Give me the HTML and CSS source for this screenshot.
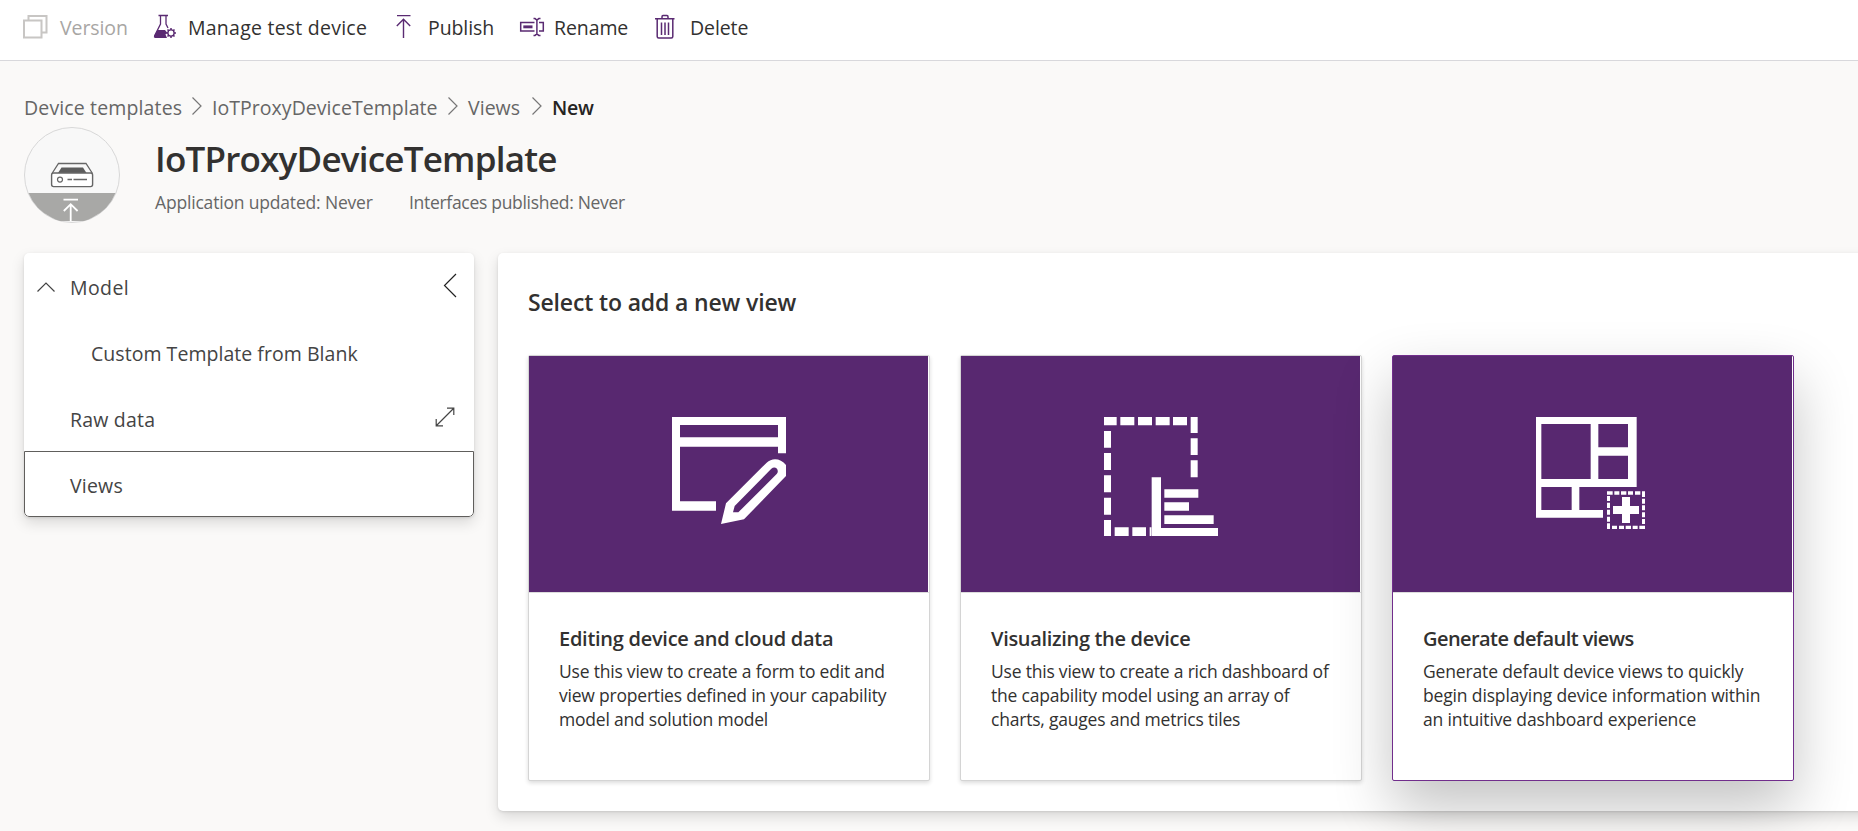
FILE: index.html
```html
<!DOCTYPE html>
<html lang="en">
<head>
<meta charset="utf-8">
<title>IoTProxyDeviceTemplate</title>
<link rel="stylesheet" href="styles.css">
</head>
<body>
<header class="toolbar">
  <div class="tool tool-disabled">
    <svg class="tool-icon" viewBox="0 0 26 26"><path d="M6.500 6.500V2.500H24.500V19H20.500M2 6.900H19.500V24H2Z" transform="translate(0 -.5)" fill="none" stroke="#c8c6c4" stroke-width="2"/></svg>
    <span>Version</span>
  </div>
  <div class="tool">
    <svg class="tool-icon" viewBox="0 0 26 26"><path d="M5.500 1.500H15M7.500 1.500V10L1.500 22M13 1.500V10L15 14" fill="none" stroke="#5a2a72" stroke-width="1.300"/><path d="M4.500 16H12L14 18.500 12.500 20.500 14 24H2Q.2 23.500 1 22Z" fill="#5a2a72"/><circle cx="18" cy="19" r="3.100" fill="none" stroke="#5a2a72" stroke-width="1.300"/><path d="M18 14v2M18 22v2M13 19h2M21 19h2M14.500 15.500l1.400 1.400M20.100 21.100l1.400 1.400M14.500 22.500l1.400-1.400M20.100 16.900l1.400-1.400" stroke="#5a2a72" stroke-width="1.500"/></svg>
    <span class="label-manage">Manage test device</span>
  </div>
  <div class="tool">
    <svg class="tool-icon" viewBox="0 0 26 26"><path d="M4 1.600H17.500M10.500 24V5.500M3.800 12L10.500 5.300 17.200 12" fill="none" stroke="#5a2a72" stroke-width="1.400"/></svg>
    <span>Publish</span>
  </div>
  <div class="tool">
    <svg class="tool-icon" viewBox="0 0 26 26"><path d="M15.500 8.500H1.700V17H15.500M20 8.500H24.300V17H20M14.500 4.600H16L17.900 6 19.800 4.600H21.500M14.500 21.400H16L17.900 20 19.800 21.400H21.500M17.900 6V20" fill="none" stroke="#5a2a72" stroke-width="1.500"/><path d="M4.300 11.400H13.500V14.300H4.300Z" fill="#5a2a72"/></svg>
    <span>Rename</span>
  </div>
  <div class="tool">
    <svg class="tool-icon" viewBox="0 0 26 26"><path d="M0 4.700H19.500M7 4.500V2.700Q7 1.600 8 1.600H12Q13 1.600 13 2.700V4.500M2.200 5V22.500Q2.200 24 3.700 24H16.300Q17.800 24 17.800 22.500V5M6.500 8.500V21M10 8.500V21M13.500 8.500V21" fill="none" stroke="#5a2a72" stroke-width="1.500"/></svg>
    <span>Delete</span>
  </div>
</header>

<nav class="breadcrumb">
  <span class="crumb crumb-root">Device templates</span>
  <svg class="crumb-sep" viewBox="0 0 10 18"><path d="M.5.500L9 9 .5 17.500"/></svg>
  <span class="crumb crumb-template">IoTProxyDeviceTemplate</span>
  <svg class="crumb-sep" viewBox="0 0 10 18"><path d="M.5.500L9 9 .5 17.500"/></svg>
  <span class="crumb crumb-views">Views</span>
  <svg class="crumb-sep" viewBox="0 0 10 18"><path d="M.5.500L9 9 .5 17.500"/></svg>
  <span class="crumb crumb-current">New</span>
</nav>

<section class="summary">
  <svg class="avatar" viewBox="0 0 96 96">
    <circle cx="48" cy="48" r="47.500" fill="#f8f8f8" stroke="#d8d8d8"/>
    <path d="M4.500 66H91.500A47 47 0 0 1 68 90.800Q65 92.600 60 94H36Q31 92.600 28 90.800A47 47 0 0 1 4.500 66Z" fill="#a8a8a6"/>
    <path d="M28 46.500L34.500 36.500H62L68.500 46.500" fill="none" stroke="#666" stroke-width="1.300"/>
    <path d="M34 46L37.500 40.500H59L62.500 46Z" fill="#5c5c5c"/>
    <rect x="27.600" y="46" width="41" height="13.600" rx="2" fill="#fff" stroke="#666" stroke-width="1.400"/>
    <circle cx="36" cy="52.600" r="2.500" fill="none" stroke="#666" stroke-width="1.200"/>
    <path d="M43.500 52.500H48M49.500 52.500H63" stroke="#666" stroke-width="1.300"/>
    <path d="M39.500 72.700H54M46.700 94V77M39.800 84L46.700 77.200 53.600 84" fill="none" stroke="#fff" stroke-width="1.800"/>
  </svg>
  <div class="summary-text">
    <h1 class="title">IoTProxyDeviceTemplate</h1>
    <div class="meta"><span class="meta-first">Application updated: Never</span><span class="meta-second">Interfaces published: Never</span></div>
  </div>
</section>

<main class="layout">
  <aside class="sidebar">
    <div class="row">
      <svg class="row-toggle" viewBox="0 0 20 12"><path d="M1.500 10.500L10 2 18.500 10.500"/></svg>
      <span class="row-label label-model">Model</span>
      <svg class="row-collapse" viewBox="0 0 14 26"><path d="M13 1L1.500 12.500 13 24"/></svg>
    </div>
    <div class="row row-child"><span class="row-label">Custom Template from Blank</span></div>
    <div class="row row-plain">
      <span class="row-label label-raw">Raw data</span>
      <svg class="row-expand" viewBox="0 0 20 20"><path d="M1.500 18.500L18.500 1.500M12 1.200H18.800V8M1.200 12V18.800H8"/></svg>
    </div>
    <div class="row row-plain row-selected"><span class="row-label label-views">Views</span></div>
  </aside>

  <section class="panel">
    <h2 class="panel-title">Select to add a new view</h2>
    <div class="cards">
      <article class="card">
        <div class="card-art">
          <svg width="114" height="107" viewBox="96 81 342 321" fill="#fff"><path d="M96 81H438V190H414V170H120V334H228V362H96ZM120 105V142H414V105Z" fill-rule="evenodd"/><path d="M243 402L258 340 380 218C396 202 422 204 438 225V258L312 388ZM279 367L295 367 410 252C420 240 406 226 394 236L284 348Z" fill-rule="evenodd"/></svg>
        </div>
        <div class="card-body">
          <h3 class="card-title title-edit">Editing device and cloud data</h3>
          <p class="card-text">Use this view to create a form to edit and<br>view properties defined in your capability<br>model and solution model</p>
        </div>
      </article>
      <article class="card">
        <div class="card-art">
          <svg width="114" height="119" viewBox="72 81 342 357" fill="#fff"><path d="M72 81h38v25h-38zM121 81h42v25h-42zM174 81h42v25h-42zM227 81h42v25h-42zM279 81h42v25h-42zM332 81h21v48h-21zM332 145h21v50h-21zM332 211h21v51h-21zM72 123h21v50h-21zM72 189h21v51h-21zM72 256h21v51h-21zM72 323h21v51h-21zM72 390h21v48h-21zM104 412h42v26h-42zM157 412h41v26h-41zM209 412h5v26h-5zM215 262H243V414H414V438H215ZM253 298h102v25h-102zM253 337h74v25h-74zM253 376h148v26h-148z"/></svg>
        </div>
        <div class="card-body">
          <h3 class="card-title title-visual">Visualizing the device</h3>
          <p class="card-text">Use this view to create a rich dashboard of<br>the capability model using an array of<br>charts, gauges and metrics tiles</p>
        </div>
      </article>
      <article class="card card-active">
        <div class="card-art">
          <svg width="109" height="112" viewBox="78 81 327 336" fill="#fff"><path fill-rule="evenodd" d="M78 81H380V291H208V360H279V383H78ZM94 102V267H242V102ZM265 102V172H354V102ZM265 197V267H354V197ZM94 291V360H185V291Z"/><path d="M336 321h24v27h27v24h-27v27h-24v-27h-27v-24h27zM291 304h17v10h-17zM313 304h15v10h-15zM333 304h16v10h-16zM354 304h15v10h-15zM375 304h16v10h-16zM396 304h9v17h-9zM396 326h9v15h-9zM396 346h9v15h-9zM396 367h9v15h-9zM396 387h9v15h-9zM388 407h17v10h-17zM368 407h15v10h-15zM347 407h16v10h-16zM327 407h15v10h-15zM306 407h15v10h-15zM291 318h9v15h-9zM291 338h9v16h-9zM291 359h9v15h-9zM291 380h9v15h-9zM291 400h9v17h-9z"/></svg>
        </div>
        <div class="card-body">
          <h3 class="card-title title-generate">Generate default views</h3>
          <p class="card-text text-generate">Generate default device views to quickly<br>begin displaying device information within<br>an intuitive dashboard experience</p>
        </div>
      </article>
    </div>
  </section>
</main>
</body>
</html>
```
FILE: styles.css
```css
* { box-sizing: border-box; }
body {
  margin: 0;
  height: 831px;
  overflow: hidden;
  background: #faf9f8;
  color: #323130;
  font-family: "Open Sans", "Noto Sans", sans-serif;
  font-size: 19.5px;
  letter-spacing: 0.04px;
  white-space: nowrap;
}
h1, h2, h3, p { margin: 0; }
svg { display: block; flex: none; }

.toolbar {
  display: grid;
  grid-template-columns: 130px 240px 127px 135px 120px;
  height: 61px;
  padding: 12px 0 0 22px;
  background: #fff;
  border-bottom: 1px solid #d8d8dc;
}
.tool { display: flex; height: 30px; align-items: center; letter-spacing: -0.1px; }
.tool:nth-child(2), .tool:nth-child(3), .tool:nth-child(5) { padding-left: 1px; }
.tool-icon { width: 26px; height: 26px; margin-right: 9px; }
.tool:nth-child(1) .tool-icon { margin-right: 12px; }
.tool-disabled { color: #a8a6a4; }
.label-manage { letter-spacing: 0.24px; }

.breadcrumb {
  display: flex;
  align-items: center;
  height: 28px;
  margin-top: 32px;
  padding-left: 24px;
  color: #666;
}
.crumb-root { width: 168px; letter-spacing: 0.14px; }
.crumb-template { width: 236px; }
.crumb-views { width: 64px; }
.crumb-current { color: #252423; font-weight: 600; letter-spacing: -0.3px; }
.crumb-sep { width: 10px; height: 18px; margin-right: 10px; margin-top: -2px; fill: none; stroke: #777; stroke-width: 1.2; }

.summary { display: flex; height: 96px; margin: 6px 0 0 24px; }
.avatar { width: 96px; height: 96px; margin-right: 35px; }
.title { margin-top: 8px; font-size: 35px; line-height: 48px; font-weight: 600; letter-spacing: -0.78px; }
.meta { display: flex; margin-top: 7px; font-size: 17.5px; line-height: 24px; letter-spacing: -0.3px; color: #666; }
.meta-first { width: 254px; letter-spacing: -0.18px; }

.layout { display: flex; align-items: flex-start; gap: 24px; margin: 30px 0 0 24px; }
.sidebar, .panel {
  background: #fff;
  box-shadow: 0 6px 14px rgba(0,0,0,.13), 0 1px 3px rgba(0,0,0,.11);
}
.sidebar { flex: none; width: 450px; height: 264px; border-radius: 5px; overflow: hidden; }
.row { display: flex; align-items: center; height: 66px; padding-left: 12px; padding-top: 2px; color: #444; }
.row-child { padding-left: 67px; }
.row-plain { padding-left: 46px; }
.row-selected { border: 1px solid #605e5c; border-radius: 0 0 5px 5px; padding-left: 45px; }
.row-label { flex: 1; }
.label-model { letter-spacing: 0.4px; }
.label-raw { letter-spacing: 0.2px; }
.label-views { letter-spacing: 0.2px; }
.row svg { fill: none; stroke: #444; stroke-width: 1.2; }
.row-toggle { width: 20px; height: 12px; margin-right: 14px; }
.row .row-collapse { width: 14px; height: 26px; margin: -2px 17px 0 0; stroke: #222; }
.row-expand { width: 20px; height: 20px; margin: -5px 19px 0 0; }

.panel { flex: none; width: 1400px; height: 558px; border-radius: 5px; padding: 31px 0 0 30px; }
.panel-title { font-size: 23px; line-height: 36px; font-weight: 600; letter-spacing: -0.15px; }
.cards { display: flex; gap: 30px; margin-top: 35px; }
.card {
  flex: none;
  width: 402px;
  height: 426px;
  background: #fff;
  border: 1px solid #d4d4d4;
  border-radius: 2px;
  box-shadow: 0 2px 4px rgba(0,0,0,.14);
}
.card-active {
  border-color: #712e8c;
  box-shadow: 0 26px 58px rgba(0,0,0,.24);
}
.card-art { width: 399px; height: 236px; padding: 61px 0 0 143px; background: #582870; }
.card-body { padding: 31px 0 0 30px; border-top: 1px solid #dcdcdc; }
.card-title { font-size: 20px; line-height: 30px; font-weight: 600; }
.title-edit { letter-spacing: -0.27px; }
.title-visual { letter-spacing: -0.32px; }
.title-generate { letter-spacing: -0.57px; }
.card-text { margin-top: 5px; font-size: 17.5px; line-height: 24.2px; letter-spacing: -0.21px; }
.text-generate { letter-spacing: -0.15px; }
```
